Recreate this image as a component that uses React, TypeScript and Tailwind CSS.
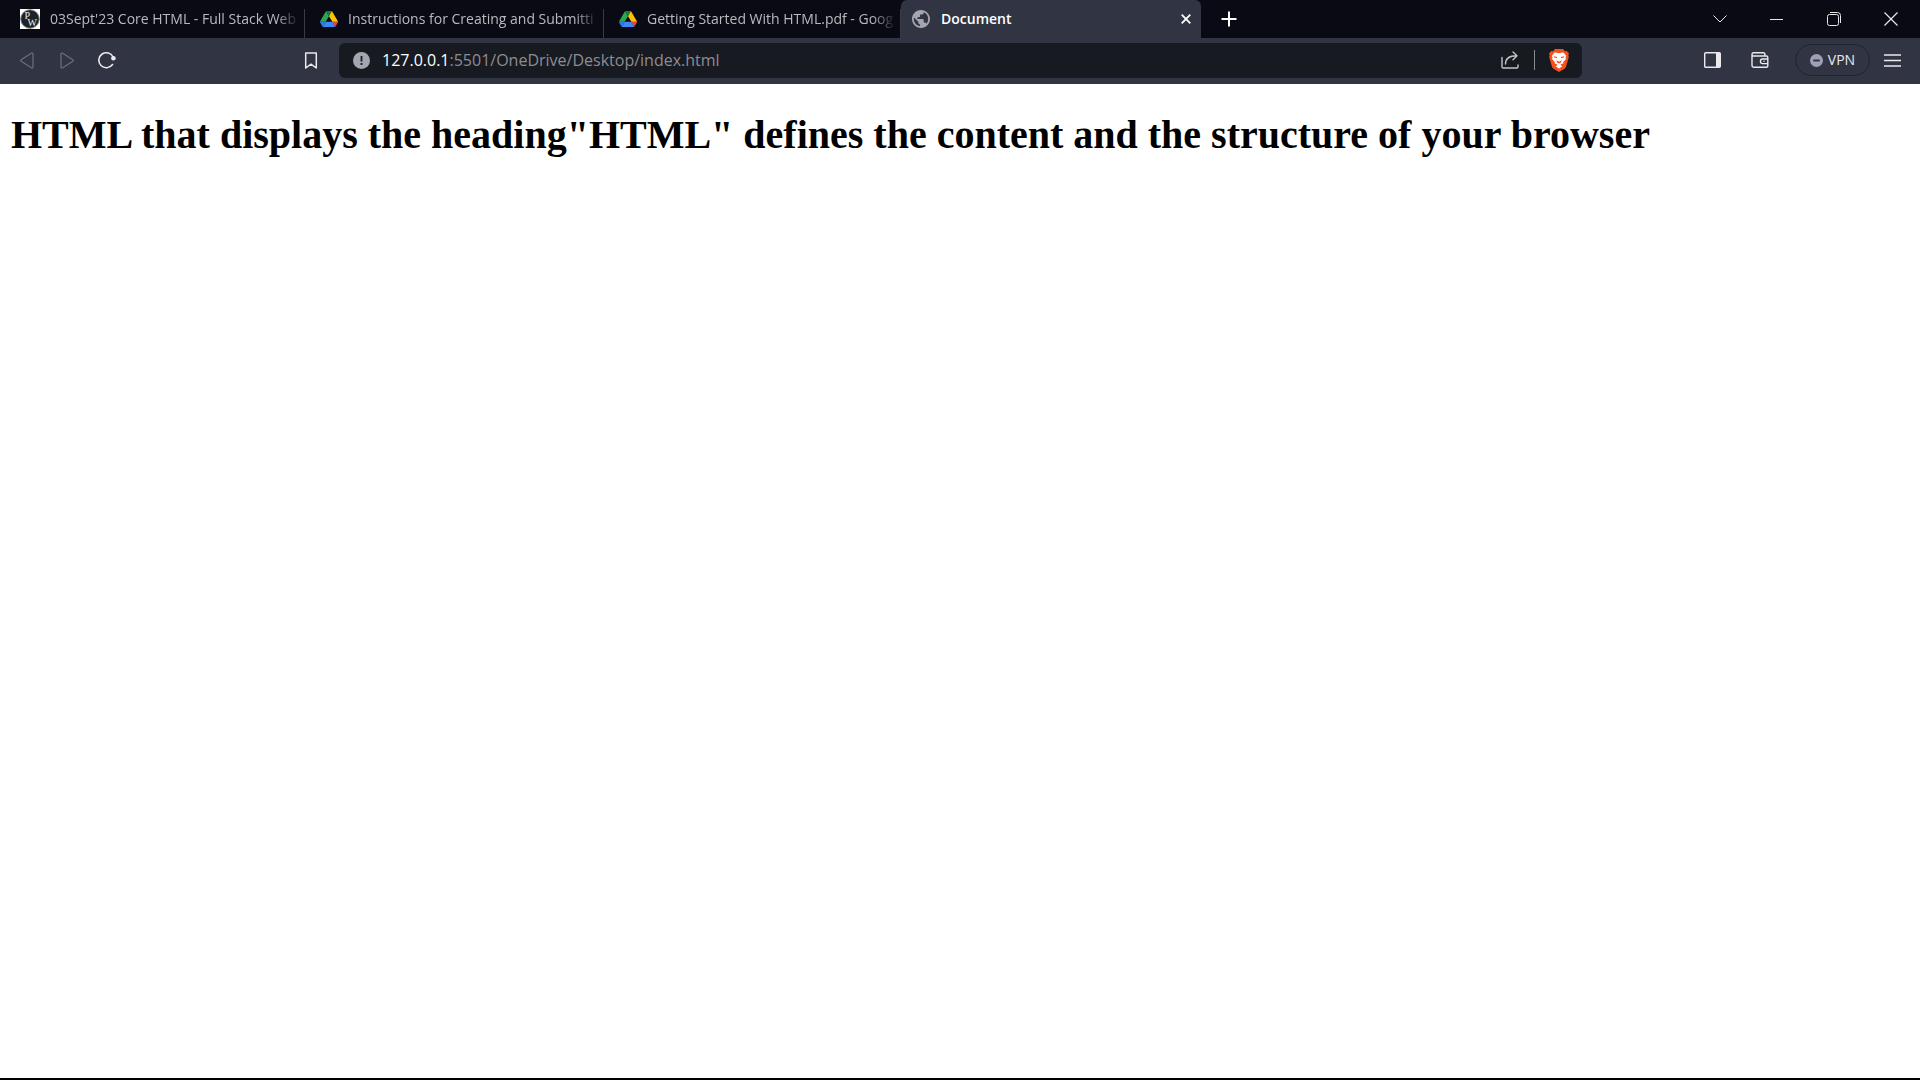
import React from "react";

const buttonBase = "flex h-8 w-10 shrink-0 items-center justify-center";

function DriveIcon() {
  return (
    <svg width="18" height="16" viewBox="0 0 87.3 78" className="shrink-0" aria-hidden="true">
      <path d="M6.6 66.85l3.85 6.65c.8 1.4 1.95 2.5 3.3 3.3L27.5 53H0c0 1.55.4 3.1 1.2 4.5z" fill="#2f7de8" />
      <path d="M43.65 25L29.9 1.2c-1.35.8-2.5 1.9-3.3 3.3L1.2 48.5C.4 49.9 0 51.45 0 53h27.5z" fill="#2fa653" />
      <path d="M73.55 76.8c1.35-.8 2.5-1.9 3.3-3.3l1.6-2.75 7.65-13.25c.8-1.4 1.2-2.95 1.2-4.5H59.8l5.85 11.5z" fill="#ea4335" />
      <path d="M43.65 25L57.4 1.2C56.05.4 54.5 0 52.9 0H34.4c-1.6 0-3.15.45-4.5 1.2z" fill="#188038" />
      <path d="M59.8 53H27.5L13.75 76.8c1.35.8 2.9 1.2 4.5 1.2h50.8c1.6 0 3.15-.45 4.5-1.2z" fill="#3d86fa" />
      <path d="M73.4 26.5L60.7 4.5c-.8-1.4-1.95-2.5-3.3-3.3L43.65 25 59.8 53h27.45c0-1.55-.4-3.1-1.2-4.5z" fill="#ffc107" />
    </svg>
  );
}

function PwIcon() {
  return (
    <svg width="20" height="20" viewBox="0 0 20 20" className="shrink-0" aria-hidden="true">
      <rect width="20" height="20" fill="#fff" />
      <circle cx="10" cy="10" r="9.3" fill="#1c2326" stroke="#8c9494" strokeWidth="1" />
      <g fontFamily="Liberation Serif, serif" fontSize="10" fill="#eef0f0">
        <text x="4.5" y="10">P</text>
        <text x="7.5" y="16.5">W</text>
      </g>
    </svg>
  );
}

function GlobeIcon() {
  return (
    <svg width="18" height="18" viewBox="2 2 20 20" className="shrink-0" aria-hidden="true">
      <path
        fill="#a5a7b0"
        d="M12 2C6.48 2 2 6.48 2 12s4.48 10 10 10 10-4.48 10-10S17.52 2 12 2zm-1 17.93c-3.95-.49-7-3.85-7-7.93 0-.62.08-1.21.21-1.79L9 15v1c0 1.1.9 2 2 2v1.93zm6.9-2.54c-.26-.81-1-1.39-1.9-1.39h-1v-3c0-.55-.45-1-1-1H8v-2h2c.55 0 1-.45 1-1V7h2c1.1 0 2-.9 2-2v-.41c2.93 1.19 5 4.06 5 7.41 0 2.08-.8 3.97-2.1 5.39z"
      />
    </svg>
  );
}

function BraveIcon() {
  return (
    <svg width="20" height="24" viewBox="0 0 20 24" aria-hidden="true">
      <path d="M6 1h8l2 2.2 1.8-.3L20 5.6l-.7 1.8.5 1.6-2.6 9.2c-.4 1.3-1.1 2.1-2.1 2.8L10 24l-5.1-3c-1-.7-1.7-1.5-2.1-2.8L.2 9l.5-1.6L0 5.6l2.2-2.7 1.8.3z" fill="#f4511e" />
      <path d="M10 5.2l2.2-.5 2.3-.3 2.6 3.4-.6 1.7.4 1.5-2.8 3.2.3 1.4-2 .3-1 1.1 1.9 1.2L10 20.5l-3.3-2.3L8.6 17l-1-1.1-2-.3.3-1.4L3.1 11l.4-1.5-.6-1.7 2.6-3.4 2.3.3z" fill="#fff" />
      <path d="M4.7 8.2l3.4.7-.4 1.4-2.5-.8zM15.3 8.2l-3.4.7.4 1.4 2.5-.8z" fill="#f4511e" />
      <path d="M7.4 12.2l2.6 1.6 2.6-1.6-.6 2.2L10 15.6l-2-1.2z" fill="#f4511e" />
    </svg>
  );
}

type TabProps = { title: string; icon: React.ReactNode; className: string };

function Tab({ title, icon, className }: TabProps) {
  return (
    <button
      type="button"
      role="tab"
      aria-selected="false"
      className={`relative flex min-w-0 shrink items-center gap-[10px] pr-[5px] text-left text-[14px] text-[#b9b9be] ${className}`}
    >
      {icon}
      <span className="min-w-0 flex-1 overflow-hidden pb-[2px] whitespace-nowrap [mask-image:linear-gradient(to_right,black_calc(100%-24px),transparent)]">
        {title}
      </span>
      <span className="absolute right-0 bottom-0 h-[29px] w-px bg-[#3a3b42]" />
    </button>
  );
}

function TabStrip() {
  return (
    <header className="flex h-[38px] bg-[#0a0a14]">
      <div role="tablist" className="flex min-w-0">
        <Tab title="03Sept'23 Core HTML - Full Stack Web" icon={<PwIcon />} className="w-[305px] pl-5" />
        <Tab title="Instructions for Creating and Submitti" icon={<DriveIcon />} className="w-[299px] pl-[15px]" />
        <Tab title="Getting Started With HTML.pdf - Goog" icon={<DriveIcon />} className="w-[297px] pl-[15px]" />
        <div className="flex w-[300px] min-w-0 items-center rounded-t-md bg-[#313442] pr-[5px] pl-[11px] text-white">
          <button type="button" role="tab" aria-selected="true" className="flex min-w-0 flex-1 items-center gap-[11px] text-[14px] font-semibold">
            <GlobeIcon />
            <span className="pb-[2px]">Document</span>
          </button>
          <button type="button" aria-label="Close tab" className="flex h-5 w-5 items-center justify-center">
            <svg width="10" height="10" viewBox="0 0 10 10" stroke="currentColor" strokeWidth="1.8">
              <path d="M.7.7l8.6 8.6M9.3.7L.7 9.3" />
            </svg>
          </button>
        </div>
      </div>
      <button type="button" aria-label="New tab" className="ml-2 flex w-10 items-center justify-center text-white">
        <svg width="16" height="16" viewBox="0 0 16 16" stroke="currentColor" strokeWidth="2">
          <path d="M8 .5v15M.5 8h15" />
        </svg>
      </button>
      <div className="mr-px ml-auto flex text-[#e8e8ea]">
        <button type="button" aria-label="Search tabs" className="flex w-[57px] items-center justify-center">
          <svg width="14" height="8" viewBox="0 0 14 8" fill="none" stroke="currentColor" strokeWidth="1">
            <path d="M.5.5L7 7 13.5.5" />
          </svg>
        </button>
        <button type="button" aria-label="Minimize" className="flex w-[57px] items-center justify-center">
          <svg width="13" height="1" viewBox="0 0 13 1" fill="currentColor">
            <rect width="13" height="1" />
          </svg>
        </button>
        <button type="button" aria-label="Restore" className="flex w-[57px] items-center justify-center">
          <svg width="14" height="14" viewBox="0 0 14 14" fill="none" stroke="currentColor" strokeWidth="1">
            <rect x=".5" y="2.5" width="11" height="11" rx="2" />
            <path d="M3 .5h7.5a3 3 0 0 1 3 3V11" />
          </svg>
        </button>
        <button type="button" aria-label="Close window" className="flex w-[57px] items-center justify-center">
          <svg width="14" height="14" viewBox="0 0 14 14" stroke="currentColor" strokeWidth="1.2">
            <path d="M.5.5l13 13M13.5.5l-13 13" />
          </svg>
        </button>
      </div>
    </header>
  );
}

function Toolbar() {
  return (
    <nav className="flex h-[46px] items-center bg-[#313442] pb-[2px] text-[#e9e9ee]">
      <button type="button" aria-label="Back" className={`${buttonBase} ml-[7px] text-[#6b6d79]`}>
        <svg width="14" height="17" viewBox="0 0 14 17" fill="none" stroke="currentColor" strokeWidth="1.3" strokeLinejoin="round">
          <path d="M11.7 1L1.2 7.7a1 1 0 0 0 0 1.6L11.7 16a1 1 0 0 0 1.3-1V2a1 1 0 0 0-1.3-1z" />
        </svg>
      </button>
      <button type="button" aria-label="Forward" className={`${buttonBase} text-[#6b6d79]`}>
        <svg width="14" height="17" viewBox="0 0 14 17" fill="none" stroke="currentColor" strokeWidth="1.3" strokeLinejoin="round">
          <path d="M2.3 1l10.5 6.7a1 1 0 0 1 0 1.6L2.3 16A1 1 0 0 1 1 15V2a1 1 0 0 1 1.3-1z" />
        </svg>
      </button>
      <button type="button" aria-label="Reload" className={buttonBase}>
        <svg width="18" height="18" viewBox="0 0 18 18" fill="none" stroke="currentColor" strokeWidth="1.6">
          <path d="M15.2 6.2A7.5 7.5 0 1 0 14.5 13.5" strokeLinecap="round" />
          <circle cx="15.4" cy="7.2" r="2.3" fill="currentColor" stroke="none" />
        </svg>
      </button>
      <button type="button" aria-label="Bookmark this page" className={`${buttonBase} ml-[164px]`}>
        <svg width="14" height="17" viewBox="0 0 14 17" fill="none" stroke="currentColor" strokeWidth="1.5" strokeLinejoin="round">
          <path d="M1.7 1h10.6v15L7 12.2 1.7 16z" />
        </svg>
      </button>

      <div className="ml-2 flex h-[35px] min-w-0 flex-1 items-center rounded-md bg-[#181a22] pr-[13px]">
        <button type="button" aria-label="Site information" className="ml-[14px] shrink-0">
          <svg width="17" height="17" viewBox="0 0 17 17">
            <circle cx="8.5" cy="8.5" r="8.5" fill="#a3a5b0" />
            <path d="M7.6 4h1.8v5.5H7.6zM7.6 11h1.8v2H7.6z" fill="#181a22" />
          </svg>
        </button>
        <a href="#" className="ml-3 min-w-0 flex-1 truncate text-[16px] text-[#8c8d92]">
          <span className="text-white">127.0.0.1</span>:5501/OneDrive/Desktop/index.html
        </a>
        <button type="button" aria-label="Share" className="shrink-0 text-[#c3c4c9]">
          <svg width="18" height="18" viewBox="0 0 18 18" fill="none" stroke="currentColor" strokeWidth="1.4" strokeLinecap="round" strokeLinejoin="round">
            <path d="M1 6.5v9.3c0 .7.5 1.2 1.2 1.2h13.6c.7 0 1.2-.5 1.2-1.2V14" />
            <path d="M4.5 13c0-5 3.5-8.3 11-8.3M12 1l4 3.7-4 4" />
          </svg>
        </button>
        <span className="ml-[15px] h-5 w-px shrink-0 bg-[#8a8b90]" />
        <button type="button" aria-label="Brave Shields" className="ml-[14px] shrink-0">
          <BraveIcon />
        </button>
      </div>

      <button type="button" aria-label="Side panel" className={`${buttonBase} ml-[110px]`}>
        <svg width="17" height="16" viewBox="0 0 17 16">
          <rect x=".7" y=".7" width="15.6" height="14.6" rx="1" fill="none" stroke="currentColor" strokeWidth="1.4" />
          <path d="M12 1h4.5v14H12z" fill="currentColor" />
        </svg>
      </button>
      <button type="button" aria-label="Wallet" className={`${buttonBase} ml-2`}>
        <svg width="18" height="16" viewBox="0 0 18 16" fill="none" stroke="currentColor" strokeWidth="1.4" strokeLinejoin="round">
          <path d="M1 3.2V13.5c0 1 .7 1.7 1.7 1.7h12.6c1 0 1.5-.6 1.5-1.5V5.5c0-1-.5-1.5-1.5-1.5H2.2C1.4 4 1 3.5 1 2.7 1 1.5 1.6.8 2.7.8H12c1.3 0 2 .7 2 2V4" />
          <path d="M17 7h-5.5a2 2 0 0 0-2 2v.6a2 2 0 0 0 2 2H17M12.5 9.3h1" />
        </svg>
      </button>
      <button type="button" className="ml-[15px] flex h-8 w-[75px] shrink-0 items-center justify-center gap-[5px] rounded-full border border-[#212330] text-[14px]">
        <svg width="13" height="13" viewBox="0 0 12 12" aria-hidden="true">
          <circle cx="6" cy="6" r="6" fill="#a09fb8" />
          <path d="M3 5.1h6v1.8H3z" fill="#313442" />
        </svg>
        <span className="pb-[2px]">VPN</span>
      </button>
      <button type="button" aria-label="Menu" className={`${buttonBase} mr-2 ml-[2px]`}>
        <svg width="17" height="13" viewBox="0 0 17 13" stroke="currentColor" strokeWidth="1.3">
          <path d="M0 1h17M0 6.5h17M0 12h17" />
        </svg>
      </button>
    </nav>
  );
}

export default function App() {
  return (
    <div className="flex min-h-screen flex-col border-b-2 border-black bg-white font-['Open_Sans',sans-serif]">
      <TabStrip />
      <Toolbar />
      <main className="flex-1 px-[11px] pt-7">
        <h1 className="font-['Liberation_Serif',serif] text-[40px] leading-[46px] font-bold text-black">
          HTML that displays the heading"HTML" defines the content and the structure of your browser
        </h1>
      </main>
    </div>
  );
}
